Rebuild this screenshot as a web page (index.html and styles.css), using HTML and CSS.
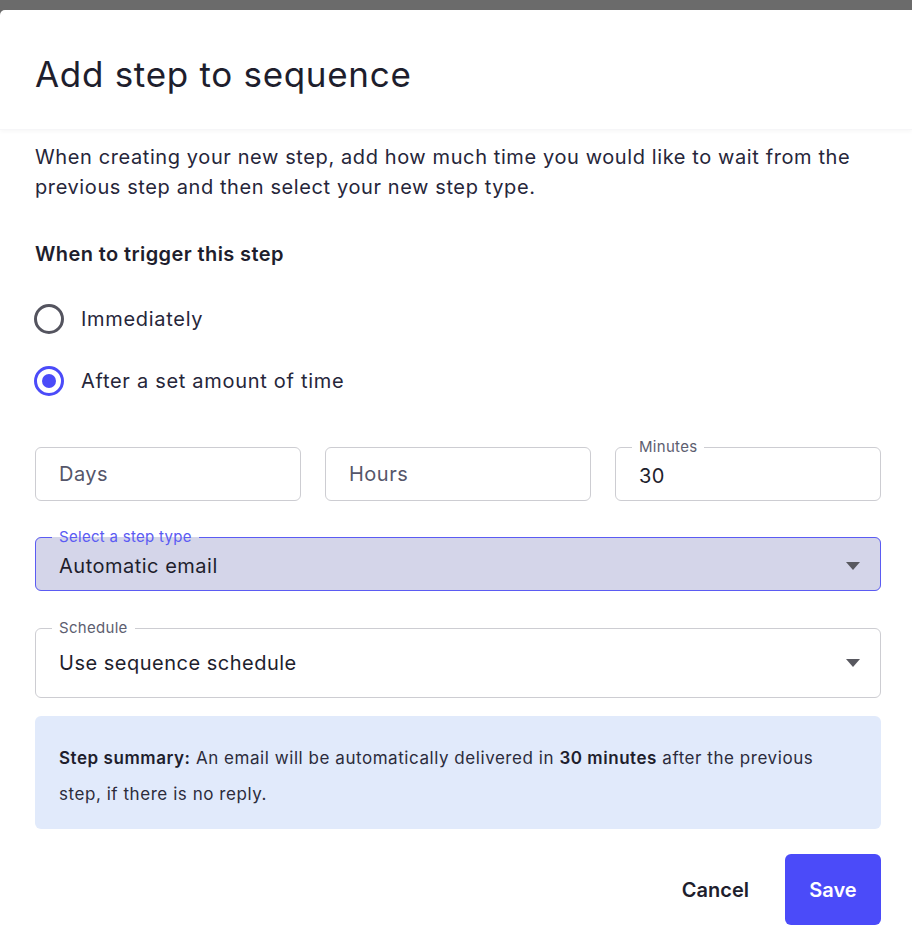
FILE: index.html
```html
<!DOCTYPE html>
<html lang="en">
<head>
    <meta charset="UTF-8">
    <meta name="viewport" content="width=device-width, initial-scale=1.0">
    <title>Add step to sequence</title>
    <link rel="stylesheet" href="styles.css">
</head>
<body>

    <div class="modal">
        <div class="modal-header">
            <h1 class="modal-title">Add step to sequence</h1>
        </div>

        <div class="modal-body">
            <p class="intro">When creating your new step, add how much time you would like to wait from the previous step and then select your new step type.</p>

            <h2 class="section-title">When to trigger this step</h2>

            <div class="radio-group">
                <label class="radio-row">
                    <span class="radio"></span>
                    <span class="radio-label">Immediately</span>
                </label>
                <label class="radio-row">
                    <span class="radio checked"></span>
                    <span class="radio-label">After a set amount of time</span>
                </label>
            </div>

            <div class="time-fields">
                <div class="field">
                    <span class="placeholder">Days</span>
                </div>
                <div class="field">
                    <span class="placeholder">Hours</span>
                </div>
                <fieldset class="field outlined">
                    <legend>Minutes</legend>
                    <span class="value">30</span>
                </fieldset>
            </div>

            <fieldset class="field outlined select focused">
                <legend>Select a step type</legend>
                <span class="value">Automatic email</span>
                <span class="caret"></span>
            </fieldset>

            <fieldset class="field outlined select tall">
                <legend>Schedule</legend>
                <span class="value">Use sequence schedule</span>
                <span class="caret"></span>
            </fieldset>

            <div class="summary">
                <p><b>Step summary:</b> An email will be automatically delivered in <b>30 minutes</b> after the previous step, if there is no reply.</p>
            </div>

            <div class="actions">
                <button class="btn btn-text">Cancel</button>
                <button class="btn btn-primary">Save</button>
            </div>
        </div>
    </div>

</body>
</html>
```

FILE: styles.css
```css
* {
    margin: 0;
    padding: 0;
    box-sizing: border-box;
}

body {
    font-family: 'Inter', 'Noto Sans', sans-serif;
    background-color: #6b6b6b;
    color: #1e1e2d;
    height: 939px;
    overflow: hidden;
}

.modal {
    margin-top: 10px;
    background-color: #ffffff;
    border-top-left-radius: 5px;
    height: 929px;
}

/* Cabeçalho */
.modal-header {
    height: 120px;
    padding-left: 35px;
    display: flex;
    align-items: center;
    box-shadow: 0 2px 4px rgba(0, 0, 0, 0.03);
    border-bottom: 1px solid #f6f6f8;
}

.modal-title {
    font-size: 35px;
    font-weight: 400;
    letter-spacing: 0.7px;
    color: #1e1e2d;
    padding-top: 8px;
}

.modal-body {
    padding: 12px 31px 0 35px;
}

.intro {
    font-size: 20px;
    letter-spacing: 0.6px;
    line-height: 30px;
    color: #26263a;
}

.section-title {
    font-size: 20px;
    font-weight: 600;
    letter-spacing: 0.4px;
    margin-top: 37px;
    line-height: 30px;
}

/* Radios */
.radio-group {
    margin-top: 35px;
    display: flex;
    flex-direction: column;
    gap: 32px;
}

.radio-row {
    display: flex;
    align-items: center;
    gap: 17px;
    height: 30px;
}

.radio {
    width: 30px;
    height: 30px;
    border-radius: 50%;
    border: 3px solid #54545f;
    display: flex;
    align-items: center;
    justify-content: center;
    margin-left: -1px;
}

.radio.checked {
    border-color: #4b4bf9;
}

.radio.checked::after {
    content: '';
    width: 14px;
    height: 14px;
    border-radius: 50%;
    background-color: #4b4bf9;
}

.radio-label {
    font-size: 20px;
    letter-spacing: 0.7px;
    color: #26263a;
}

/* Campos */
.time-fields {
    margin-top: 51px;
    display: grid;
    grid-template-columns: 1fr 1fr 1fr;
    gap: 24px;
}

.field {
    height: 54px;
    border: 1px solid #cdcdd2;
    border-radius: 6px;
    padding: 0 23px;
    display: flex;
    align-items: center;
    position: relative;
    font-size: 20px;
    letter-spacing: 0.5px;
    min-width: 0;
}

.placeholder {
    color: #55566a;
}

.value {
    color: #1e1e2d;
    flex: 1;
}

fieldset.field {
    height: 61px;
    margin-top: -7px;
    padding-bottom: 3px;
}

.field legend {
    font-size: 15px;
    letter-spacing: 0.3px;
    color: #5d5e70;
    padding: 0 7px;
    margin-left: -7px;
    line-height: 14px;
}

.field.select {
    margin-top: 29px;
    width: 100%;
}

.field.select.focused {
    background-color: #d4d5e9;
    border-color: #5b5bf3;
}

.field.select.focused legend {
    color: #5b5bf3;
}

.field.select.tall {
    height: 77px;
    margin-top: 30px;
    padding-bottom: 6px;
}

.caret {
    width: 0;
    height: 0;
    border-left: 7px solid transparent;
    border-right: 7px solid transparent;
    border-top: 8px solid #58585f;
    margin-right: -3px;
}

/* Resumo */
.summary {
    margin-top: 18px;
    background-color: #e1eafb;
    border-radius: 6px;
    padding: 24px 50px 17px 24px;
    font-size: 17px;
    letter-spacing: 0.55px;
    line-height: 36px;
    color: #2c2c3c;
}

.summary b {
    font-weight: 600;
    color: #1e1e2d;
}

/* Botões */
.actions {
    margin-top: 25px;
    display: flex;
    justify-content: flex-end;
    align-items: center;
    gap: 36px;
}

.btn {
    font-family: 'Inter', 'Liberation Sans', sans-serif;
    font-size: 20px;
    font-weight: 600;
    border: none;
    background: none;
    cursor: pointer;
}

.btn-text {
    color: #1e1e2d;
}

.btn-primary {
    width: 96px;
    height: 71px;
    border-radius: 6px;
    background-color: #4b4bf9;
    color: #ffffff;
}
```
